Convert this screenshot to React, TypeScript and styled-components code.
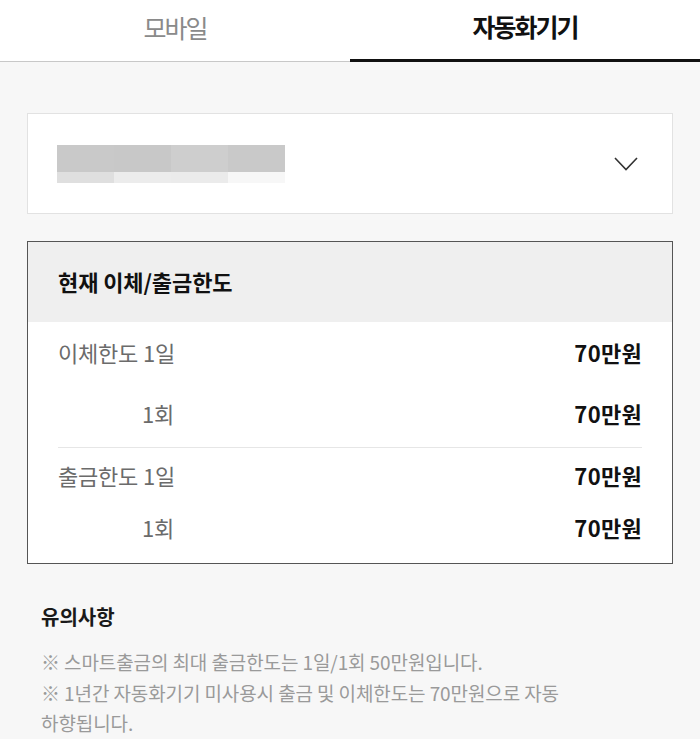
import React from "react";
import styled, { createGlobalStyle } from "styled-components";

const GlobalStyle = createGlobalStyle`
  html, body {
    margin: 0;
    padding: 0;
    background: #f7f7f7;
  }
  body {
    font-family: "Noto Sans CJK KR", "Noto Sans", sans-serif;
    color: #111;
  }
  * { box-sizing: border-box; }
`;

const mosaic = [
  ["#c9c9c9", "#c8c8c8", "#cecece", "#c9c9c9"],
  ["#dfdfdf", "#ececec", "#ebebeb", "#f7f7f7"],
];

const limits = [
  {
    key: "transfer",
    top: 14,
    gap: 29,
    bottom: 18,
    rows: [
      { label: "이체한도 1일", amount: "70만원" },
      { label: "1회", amount: "70만원" },
    ],
  },
  {
    key: "withdraw",
    top: 11,
    gap: 20,
    bottom: 20,
    rows: [
      { label: "출금한도 1일", amount: "70만원" },
      { label: "1회", amount: "70만원" },
    ],
  },
];

const App = () => {
  return (
    <Page>
      <GlobalStyle />
      <Tabs>
        <Tab>모바일</Tab>
        <Tab $active>자동화기기</Tab>
      </Tabs>

      <Body>
        <SelectBox>
          <Mosaic>
            {mosaic.map((row, r) =>
              row.map((color, c) => (
                <MosaicCell key={`${r}-${c}`} $color={color} $tall={r === 0} />
              ))
            )}
          </Mosaic>
          <Chevron width="24" height="14" viewBox="0 0 24 14">
            <polyline points="1,1 12,12.5 23,1" fill="none" stroke="#333" strokeWidth="1.6" />
          </Chevron>
        </SelectBox>

        <LimitTable>
          <TableHead>현재 이체/출금한도</TableHead>
          {limits.map((group, i) => (
            <Group key={group.key} $top={group.top} $gap={group.gap} $bottom={group.bottom} $divider={i > 0}>
              {group.rows.map((row, j) => (
                <Row key={j}>
                  <Label>{row.label}</Label>
                  <Amount>{row.amount}</Amount>
                </Row>
              ))}
            </Group>
          ))}
        </LimitTable>
      </Body>

      <Notes>
        <NotesTitle>유의사항</NotesTitle>
        <NoteText>※ 스마트출금의 최대 출금한도는 1일/1회 50만원입니다.</NoteText>
        <NoteText>※ 1년간 자동화기기 미사용시 출금 및 이체한도는 70만원으로 자동 하향됩니다.</NoteText>
      </Notes>
    </Page>
  );
};

const Page = styled.div`
  width: 700px;
  min-height: 739px;
  background: #f7f7f7;
`;

const Tabs = styled.div`
  display: flex;
  background: #fff;
`;

const Tab = styled.div<{ $active?: boolean }>`
  flex: 1;
  height: 62px;
  display: flex;
  align-items: center;
  justify-content: center;
  padding-bottom: 8px;
  font-size: 25px;
  letter-spacing: -2px;
  font-weight: ${({ $active }) => ($active ? 700 : 400)};
  color: ${({ $active }) => ($active ? "#111" : "#8a8a8a")};
  border-bottom: ${({ $active }) => ($active ? "3px solid #111" : "1px solid #c8c8c8")};
`;

const Body = styled.div`
  padding: 51px 27px 0;
  display: flex;
  flex-direction: column;
  gap: 27px;
`;

const SelectBox = styled.div`
  height: 101px;
  background: #fff;
  border: 1px solid #e2e2e2;
  display: flex;
  align-items: center;
  justify-content: space-between;
  padding: 0 34px 0 29px;
`;

const Mosaic = styled.div`
  display: grid;
  grid-template-columns: repeat(4, 57px);
  margin-top: 1px;
`;

const MosaicCell = styled.div<{ $color: string; $tall: boolean }>`
  height: ${({ $tall }) => ($tall ? "27px" : "11px")};
  background: ${({ $color }) => $color};
`;

const Chevron = styled.svg`
  display: block;
`;

const LimitTable = styled.div`
  background: #fff;
  border: 1px solid #555;
`;

const TableHead = styled.div`
  height: 80px;
  background: #efefef;
  display: flex;
  align-items: center;
  padding: 0 30px 2px;
  font-size: 22px;
  font-weight: 700;
  letter-spacing: -0.1px;
  color: #111;
`;

const Group = styled.div<{ $top: number; $gap: number; $bottom: number; $divider: boolean }>`
  margin: 0 30px;
  padding: ${({ $top, $bottom }) => `${$top}px 0 ${$bottom}px`};
  display: flex;
  flex-direction: column;
  gap: ${({ $gap }) => `${$gap}px`};
  border-top: ${({ $divider }) => ($divider ? "1px solid #e6e6e6" : "none")};
`;

const Row = styled.div`
  height: 32px;
  display: flex;
  align-items: center;
  justify-content: space-between;
`;

const Label = styled.span`
  width: 116px;
  text-align: right;
  white-space: nowrap;
  font-size: 22px;
  letter-spacing: -0.2px;
  color: #6b6b6b;
`;

const Amount = styled.span`
  font-size: 22px;
  font-weight: 700;
  letter-spacing: 0.3px;
  color: #111;
`;

const Notes = styled.div`
  padding: 38px 41px 0;
  max-width: 640px;
`;

const NotesTitle = styled.div`
  font-size: 20px;
  font-weight: 700;
  letter-spacing: 0;
  color: #1a1a1a;
  margin-bottom: 16px;
`;

const NoteText = styled.p`
  margin: 0;
  font-size: 19px;
  line-height: 30.5px;
  letter-spacing: -0.1px;
  word-break: keep-all;
  color: #9a9a9a;
`;

export default App;
